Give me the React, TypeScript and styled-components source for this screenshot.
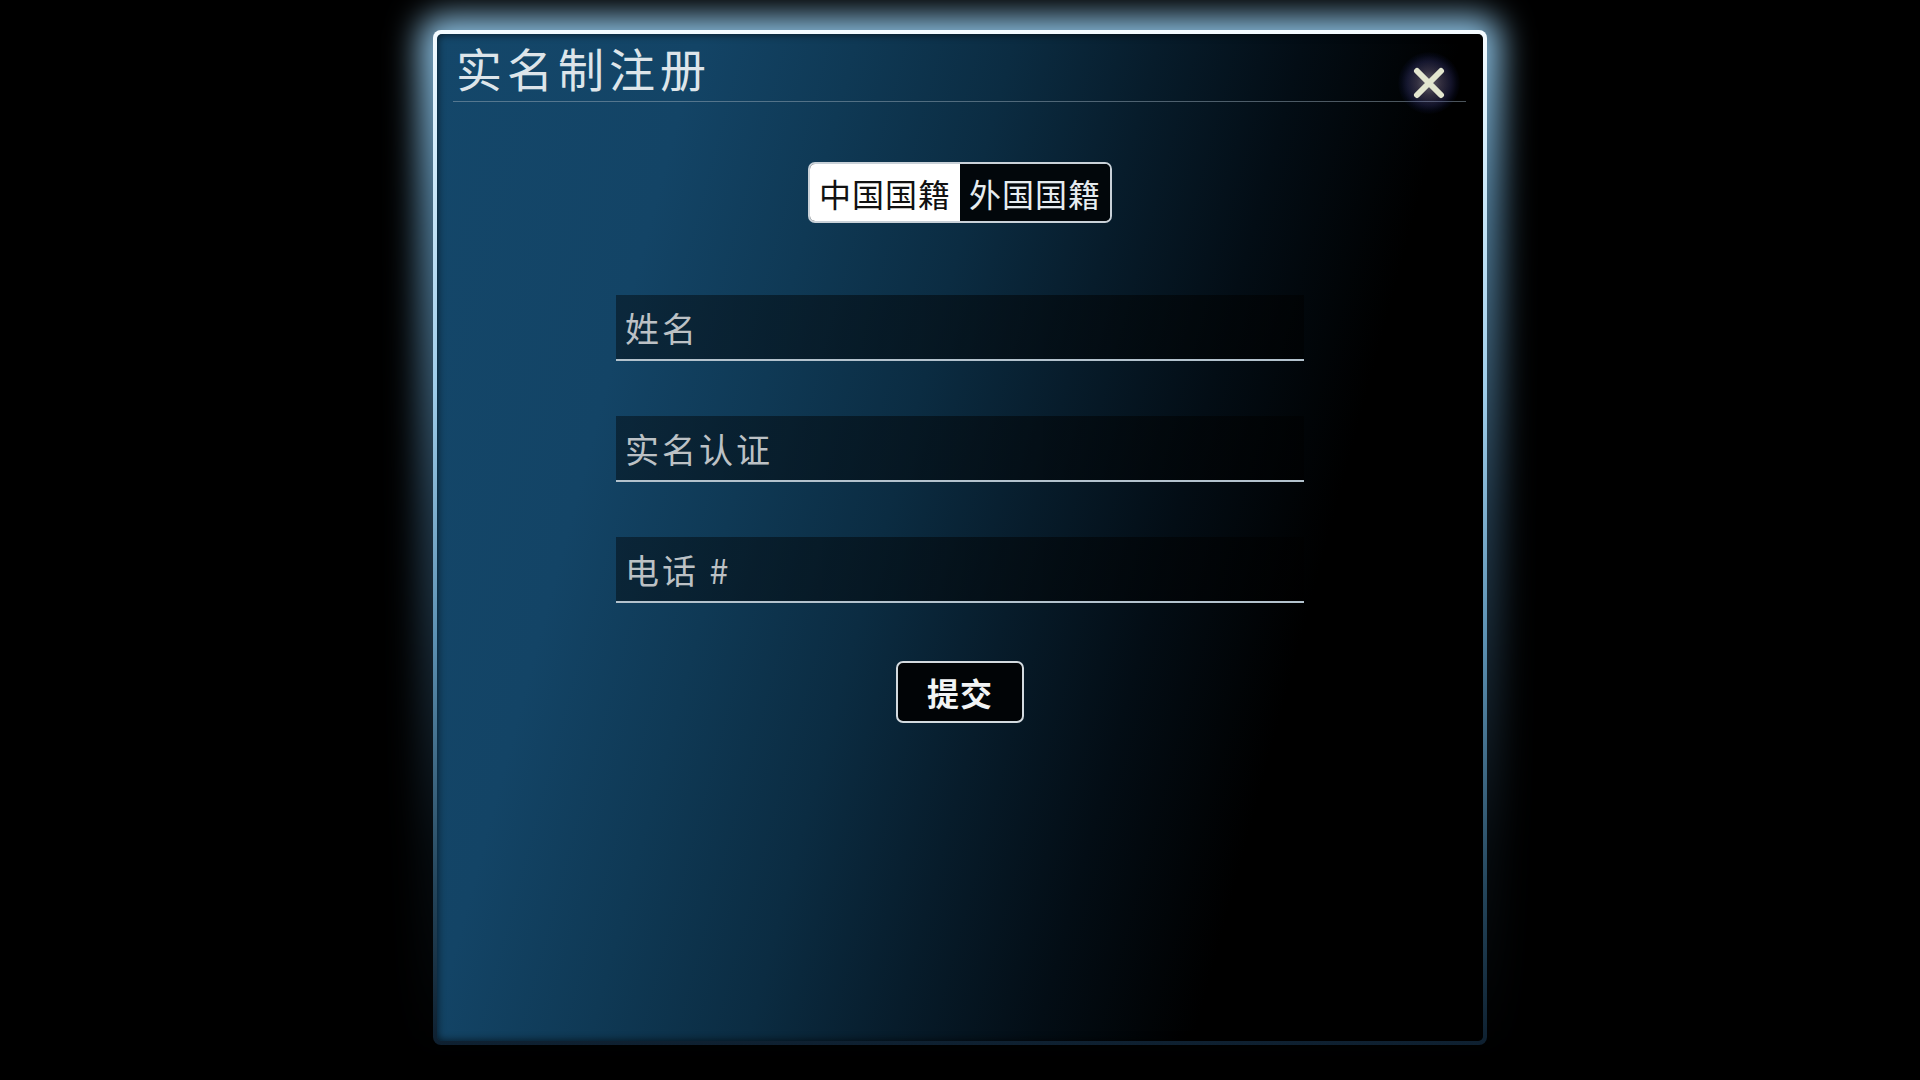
import React, { useState } from "react";
import styled, { createGlobalStyle } from "styled-components";

const GlobalStyle = createGlobalStyle`
  html {
    background: #000;
  }
  html, body {
    margin: 0;
    padding: 0;
    width: 100%;
    height: 100%;
    overflow: hidden;
  }
  body {
    background: transparent;
    font-family: "Noto Sans CJK SC", "Noto Sans", "Liberation Sans", sans-serif;
  }
  * { box-sizing: border-box; }
`;

const Page = styled.div`
  width: 1920px;
  height: 1080px;
  display: flex;
  justify-content: center;
  align-items: flex-start;
  padding-top: 30px;
`;

const Frame = styled.div`
  position: relative;
  width: 1054px;
  height: 1015px;
  padding: 4px;
  border-radius: 8px;
  background: linear-gradient(
    to bottom,
    #f4fbff 0%,
    #d2ecfb 12%,
    #9fcdea 35%,
    #5b90b2 60%,
    #23445a 85%,
    #0e2030 100%
  );

  &::before {
    content: "";
    position: absolute;
    inset: -14px;
    border-radius: 22px;
    background: linear-gradient(
      to bottom,
      rgba(150, 205, 240, 0.95) 0%,
      rgba(120, 185, 228, 0.7) 18%,
      rgba(85, 145, 190, 0.42) 48%,
      rgba(45, 85, 115, 0.14) 80%,
      rgba(0, 0, 0, 0) 100%
    );
    filter: blur(16px);
    z-index: -1;
  }
`;

const Panel = styled.div`
  position: relative;
  width: 100%;
  height: 100%;
  border-radius: 5px;
  display: flex;
  flex-direction: column;
  background: linear-gradient(
    105deg,
    #14476a 0%,
    #134466 20%,
    #0f3955 32%,
    #0b2c42 44%,
    #071c2b 55%,
    #030d15 66%,
    #000 78%,
    #000 100%
  );
  box-shadow: inset 0 0 8px rgba(0, 0, 0, 0.7);
`;

const Header = styled.div`
  margin: 0 17px 0 16px;
  padding: 5px 2px 0 3px;
  height: 68px;
  border-bottom: 1px solid rgba(150, 168, 182, 0.5);
`;

const Title = styled.h1`
  margin: 0;
  font-size: 46px;
  line-height: 56px;
  font-weight: 400;
  color: #dde5ea;
  letter-spacing: 5px;
`;

const CloseButton = styled.button`
  position: absolute;
  top: 18px;
  right: 23px;
  width: 62px;
  height: 62px;
  padding: 0;
  border: none;
  border-radius: 50%;
  cursor: pointer;
  display: flex;
  align-items: center;
  justify-content: center;
  background: radial-gradient(
    circle at 50% 50%,
    rgba(220, 210, 230, 0.45) 0%,
    rgba(160, 145, 200, 0.3) 28%,
    rgba(80, 80, 170, 0.25) 50%,
    rgba(35, 45, 130, 0.12) 63%,
    rgba(0, 0, 0, 0) 72%
  );
`;

const Body = styled.div`
  display: flex;
  flex-direction: column;
  align-items: center;
`;

const Toggle = styled.div`
  margin-top: 60px;
  display: flex;
  height: 61px;
  border: 2px solid #c9d1d8;
  border-radius: 7px;
  overflow: hidden;
  background: #02070b;
`;

const Segment = styled.button<{ $active: boolean }>`
  height: 100%;
  padding: 0 9px;
  border: none;
  margin: 0;
  font-family: "Noto Sans CJK SC", "Noto Sans", sans-serif;
  font-size: 32px;
  line-height: 1;
  font-weight: 400;
  letter-spacing: 1px;
  cursor: pointer;
  background: ${(p) => (p.$active ? "#ffffff" : "#02070b")};
  color: ${(p) => (p.$active ? "#111111" : "#e6ecf0")};
`;

const Form = styled.div`
  margin-top: 72px;
  display: flex;
  flex-direction: column;
  gap: 55px;
`;

const Field = styled.input`
  display: block;
  width: 688px;
  height: 66px;
  padding: 0 10px 0 9px;
  margin: 0;
  border: none;
  border-bottom: 2px solid #b3c2cd;
  border-radius: 0;
  outline: none;
  background: linear-gradient(
    to right,
    rgba(0, 0, 0, 0.42),
    rgba(0, 0, 0, 0.55)
  );
  font-family: "Noto Sans CJK SC", "Noto Sans", sans-serif;
  font-size: 34px;
  letter-spacing: 3px;
  color: #c3c8cc;

  &::placeholder {
    color: #bcc1c5;
    opacity: 1;
  }
`;

const Submit = styled.button`
  margin-top: 58px;
  width: 128px;
  height: 62px;
  border: 2px solid #d3dadf;
  border-radius: 7px;
  background: #010406;
  color: #f2f4f5;
  font-family: "Noto Sans CJK SC", "Noto Sans", sans-serif;
  font-size: 32px;
  font-weight: 700;
  letter-spacing: 1px;
  line-height: 1;
  cursor: pointer;
`;

export default function App() {
  const [nation, setNation] = useState<"cn" | "foreign">("cn");
  return (
    <>
      <GlobalStyle />
      <Page>
        <Frame>
          <Panel>
            <Header>
              <Title>实名制注册</Title>
            </Header>
            <CloseButton aria-label="关闭">
              <svg width="32" height="32" viewBox="0 0 32 32">
                <path
                  d="M4 4 L28 28 M28 4 L4 28"
                  stroke="#e3e6cf"
                  strokeWidth="6"
                  strokeLinecap="round"
                  fill="none"
                />
              </svg>
            </CloseButton>
            <Body>
              <Toggle>
                <Segment $active={nation === "cn"} onClick={() => setNation("cn")}>
                  中国国籍
                </Segment>
                <Segment
                  $active={nation === "foreign"}
                  onClick={() => setNation("foreign")}
                >
                  外国国籍
                </Segment>
              </Toggle>
              <Form>
                <Field placeholder="姓名" />
                <Field placeholder="实名认证" />
                <Field placeholder="电话 #" />
              </Form>
              <Submit>提交</Submit>
            </Body>
          </Panel>
        </Frame>
      </Page>
    </>
  );
}
